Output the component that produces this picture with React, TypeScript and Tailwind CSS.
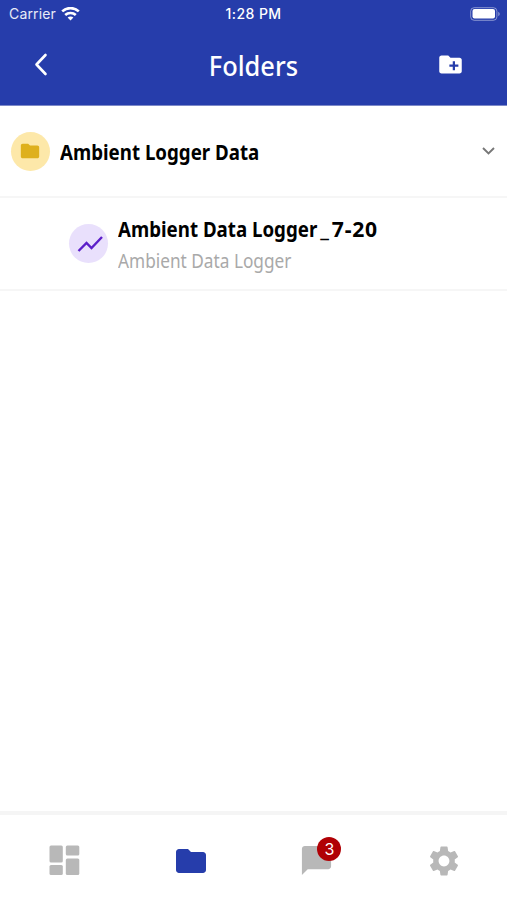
import type { ReactNode } from "react";
import { MdChatBubble, MdCreateNewFolder, MdFolder, MdSettings } from "react-icons/md";

function StatusBar() {
  return (
    <div className="grid h-[27px] grid-cols-3 items-center font-['Inter'] text-white">
      <div className="flex items-center gap-[5px] pl-[9px]">
        <span className="text-[14px] leading-none tracking-[0.15px] text-white/90">Carrier</span>
        <svg className="h-[14px] w-[19px]" viewBox="0 0 19 14" fill="none" stroke="white" strokeWidth="2.6">
          <path d="M1.2 4.4C5.8 0 13.2 0 17.8 4.4" />
          <path d="M4.2 8c2.9-2.7 7.7-2.7 10.6 0" />
          <path d="M9.5 13.4 6.6 10.6c1.5-1.4 4.3-1.4 5.8 0z" fill="white" stroke="none" />
        </svg>
      </div>
      <span className="pt-px text-center text-[14px] leading-none font-medium tracking-[0.45px]">1:28 PM</span>
      <div className="flex justify-end pr-[7px]">
        <svg className="h-[14px] w-[30px]" viewBox="0 0 30 14">
          <rect x="0.7" y="0.7" width="26.2" height="12.6" rx="3.5" fill="none" stroke="white" strokeOpacity="0.45" />
          <rect x="2.5" y="2" width="22.5" height="9.6" rx="2" fill="white" />
          <path d="M28.3 4.8c1.8.8 1.8 3.6 0 4.4z" fill="white" fillOpacity="0.5" />
        </svg>
      </div>
    </div>
  );
}

function Header() {
  return (
    <header className="h-[106px] shrink-0 border-b border-[#7d89c8] bg-[#263dab] text-white">
      <StatusBar />
      <div className="grid h-[76px] grid-cols-[82px_1fr_82px] items-center">
        <svg className="mb-[2px] ml-[34px] h-[23px] w-[14px]" viewBox="0 0 14 23" fill="none" stroke="white" strokeWidth="2.6" strokeLinecap="round" strokeLinejoin="round">
          <path d="M11.5 2 2.5 11.5l9 9.5" />
        </svg>
        <h1 className="text-center text-[27px] leading-none font-medium">
          <span className="inline-block scale-x-[0.94]">Folders</span>
        </h1>
        <MdCreateNewFolder className="mb-px ml-[12px] size-[27px]" />
      </div>
    </header>
  );
}

function FolderRow() {
  return (
    <div className="flex h-[92px] items-center border-b-2 border-[#f6f6f6] pr-[12px] pl-[11px]">
      <div className="flex size-[39px] shrink-0 items-center justify-center rounded-full bg-[#fde8a9]">
        <MdFolder className="mr-[2px] size-[22px] text-[#deb01d]" />
      </div>
      <span className="ml-[10px] w-[199px] origin-left scale-x-[0.85] text-[22px] font-bold whitespace-nowrap text-black">
        Ambient Logger Data
      </span>
      <svg className="ml-auto h-[8px] w-[13px]" viewBox="0 0 13 8" fill="none" stroke="#777" strokeWidth="1.9">
        <path d="m1 1 5.5 5.5L12 1" />
      </svg>
    </div>
  );
}

function LoggerRow() {
  return (
    <div className="flex h-[93px] items-center border-b-2 border-[#f6f6f6] pl-[69px]">
      <div className="flex size-[39px] shrink-0 items-center justify-center rounded-full bg-[#e9e0fc]">
        <svg className="ml-[3px] h-[18px] w-[27px]" viewBox="0 0 27 18" fill="none" stroke="#5c1fc9" strokeWidth="2.4">
          <path d="m1.5 16 8-8 5 5L25 2" />
        </svg>
      </div>
      <div className="ml-[10px] flex flex-col pt-[3px] whitespace-nowrap">
        <span className="origin-left scale-x-[0.85] text-[22px] leading-[31px] font-bold text-black">
          Ambient Data Logger
          <span className="ml-[4px] inline-block origin-left scale-x-[1.13] tracking-[0.8px]">
            <span className="tracking-[3px]">_</span>7-20
          </span>
        </span>
        <span className="origin-left scale-x-[0.862] pt-px text-[20px] leading-[32px] text-[#a9a9a9]">Ambient Data Logger</span>
      </div>
    </div>
  );
}

function Tab({ children }: { children: ReactNode }) {
  return <div className="flex w-[127px] justify-center">{children}</div>;
}

function TabBar() {
  return (
    <nav className="flex h-[89px] items-start border-t-4 border-[#f5f5f5] bg-white pt-[28px] text-[#b8b8b8]">
      <Tab>
        <svg className="mt-[2px] ml-[2px] h-[31px] w-[31px]" viewBox="0 0 31 31" fill="currentColor">
          <rect x="0.5" y="0.5" width="13.3" height="17" rx="1.5" />
          <rect x="0.5" y="20" width="13.3" height="10" rx="1.5" />
          <rect x="16.8" y="0.5" width="13.5" height="10" rx="1.5" />
          <rect x="16.8" y="13.5" width="13.5" height="16.5" rx="1.5" />
        </svg>
      </Tab>
      <Tab>
        <MdFolder className="ml-[2px] size-[36px] text-[#263dab]" />
      </Tab>
      <Tab>
        <div className="relative">
          <MdChatBubble className="size-[35px]" />
          <span className="absolute -top-[6px] left-[18px] flex size-[24px] items-center justify-center rounded-full bg-[#b00005] font-['Inter'] text-[16px] leading-none text-white">
            3
          </span>
        </div>
      </Tab>
      <Tab>
        <MdSettings className="size-[36px]" />
      </Tab>
    </nav>
  );
}

export default function App() {
  return (
    <div className="flex h-[900px] w-[507px] flex-col overflow-hidden bg-white font-['Noto_Sans',sans-serif]">
      <Header />
      <main className="flex-1">
        <FolderRow />
        <LoggerRow />
      </main>
      <TabBar />
    </div>
  );
}
